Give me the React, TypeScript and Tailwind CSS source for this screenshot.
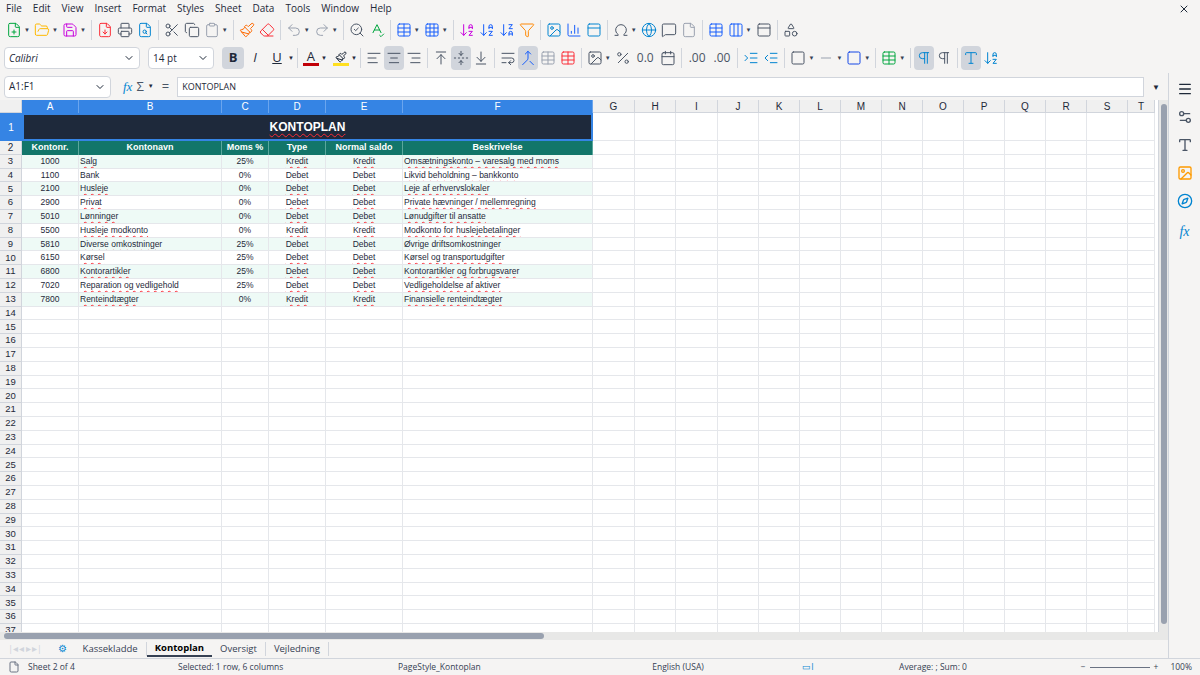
import React from "react";
import {
  FilePlus, FolderOpen, Save, FileDown, Printer, FileSearch, Scissors, Copy, Clipboard, Paintbrush, Eraser,
  Undo2, Redo2, SearchCheck, SpellCheck, Table, Grid3x3, ArrowDownAZ, ArrowDownZA, Filter, Image, BarChart3,
  Omega, Globe, MessageSquare, File, Columns3, PanelTop, Shapes, ChevronDown, AlignLeft, AlignCenter, AlignRight,
  ArrowUpToLine, FoldVertical, ArrowDownToLine, WrapText, Merge, Percent, Calendar, Indent, Outdent, Square,
  Minus, Pilcrow, Menu, Settings2, Type, ImageIcon, Compass, X,
} from "lucide-react";

const cols = [
  ["A", 57], ["B", 143], ["C", 47], ["D", 57], ["E", 77], ["F", 190], ["G", 42], ["H", 41], ["I", 42], ["J", 41],
  ["K", 41], ["L", 41], ["M", 41], ["N", 41], ["O", 41], ["P", 41], ["Q", 41], ["R", 41], ["S", 41], ["T", 27],
] as const;

const rows = [
  ["1000", "Salg", "25%", "Kredit", "Kredit", "Omsætningskonto – varesalg med moms"],
  ["1100", "Bank", "0%", "Debet", "Debet", "Likvid beholdning – bankkonto"],
  ["2100", "Husleje", "0%", "Debet", "Debet", "Leje af erhvervslokaler"],
  ["2900", "Privat", "0%", "Debet", "Debet", "Private hævninger / mellemregning"],
  ["5010", "Lønninger", "0%", "Debet", "Debet", "Lønudgifter til ansatte"],
  ["5500", "Husleje modkonto", "0%", "Kredit", "Kredit", "Modkonto for huslejebetalinger"],
  ["5810", "Diverse omkostninger", "25%", "Debet", "Debet", "Øvrige driftsomkostninger"],
  ["6150", "Kørsel", "25%", "Debet", "Debet", "Kørsel og transportudgifter"],
  ["6800", "Kontorartikler", "25%", "Debet", "Debet", "Kontorartikler og forbrugsvarer"],
  ["7020", "Reparation og vedligehold", "25%", "Debet", "Debet", "Vedligeholdelse af aktiver"],
  ["7800", "Renteindtægter", "0%", "Kredit", "Kredit", "Finansielle renteindtægter"],
];

const heads = ["Kontonr.", "Kontonavn", "Moms %", "Type", "Normal saldo", "Beskrivelse"];
const wavy = "underline decoration-wavy decoration-red-500 decoration-[1px] underline-offset-2";

function Ic({ I, c = "text-gray-600", dd = false }: { I: any; c?: string; dd?: boolean }) {
  return (
    <div className="flex items-center h-6 px-[2px]">
      <I className={`w-4 h-4 ${c}`} strokeWidth={1.5} />
      {dd && <span className="text-[6px] text-gray-700 ml-[2px]">▼</span>}
    </div>
  );
}
const Sep = () => <div className="w-px h-5 bg-gray-300 mx-[3px]" />;

export default function App() {
  return (
    <div className="w-[1200px] h-[675px] overflow-hidden bg-[#f5f4f3] text-[11px] text-gray-800 flex flex-col" style={{ fontFamily: "'Open Sans', 'Noto Sans', sans-serif" }}>
      <div className="h-[17px] flex items-center px-[6px] gap-[11px] text-[10px]">
        {["File", "Edit", "View", "Insert", "Format", "Styles", "Sheet", "Data", "Tools", "Window", "Help"].map((m) => <span key={m}>{m}</span>)}
        <X className="w-3 h-3 ml-auto mr-1" />
      </div>
      <div className="h-[26px] flex items-center px-1">
        <Ic I={FilePlus} c="text-green-600" dd /><Ic I={FolderOpen} c="text-amber-400" dd /><Ic I={Save} c="text-fuchsia-600" dd /><Sep />
        <Ic I={FileDown} c="text-red-500" /><Ic I={Printer} /><Ic I={FileSearch} c="text-sky-600" /><Sep />
        <Ic I={Scissors} /><Ic I={Copy} /><Ic I={Clipboard} c="text-gray-400" dd /><Sep />
        <Ic I={Paintbrush} c="text-orange-500" /><Ic I={Eraser} c="text-red-500" /><Sep />
        <Ic I={Undo2} c="text-gray-400" dd /><Ic I={Redo2} c="text-gray-400" dd /><Sep />
        <Ic I={SearchCheck} /><Ic I={SpellCheck} c="text-green-600" /><Sep />
        <Ic I={Table} c="text-blue-600" dd /><Ic I={Grid3x3} c="text-blue-600" dd /><Sep />
        <Ic I={ArrowDownAZ} c="text-fuchsia-600" /><Ic I={ArrowDownAZ} c="text-blue-600" /><Ic I={ArrowDownZA} c="text-blue-600" /><Ic I={Filter} c="text-orange-400" /><Sep />
        <Ic I={Image} c="text-sky-600" /><Ic I={BarChart3} c="text-blue-600" /><Ic I={PanelTop} c="text-sky-600" /><Sep />
        <Ic I={Omega} dd /><Ic I={Globe} c="text-sky-600" /><Ic I={MessageSquare} /><Ic I={File} c="text-gray-400" /><Sep />
        <Ic I={Table} c="text-blue-600" /><Ic I={Columns3} c="text-blue-600" dd /><Ic I={PanelTop} /><Sep /><Ic I={Shapes} />
      </div>
      <div className="h-[30px] flex items-center px-1">
        <div className="w-[136px] h-[22px] bg-white border border-gray-300 rounded-sm flex items-center pl-1 italic text-[10px]">Calibri<ChevronDown className="w-3 h-3 ml-auto mr-1" /></div>
        <div className="w-[66px] h-[22px] bg-white border border-gray-300 rounded-sm flex items-center pl-1 ml-2 text-[10px]">14 pt<ChevronDown className="w-3 h-3 ml-auto mr-1" /></div>
        <div className="ml-2 w-[22px] h-[22px] bg-gray-300 rounded-sm flex items-center justify-center font-bold text-[13px]">B</div>
        <div className="w-[22px] flex justify-center italic text-[13px]">I</div>
        <div className="w-[22px] flex justify-center underline text-[13px]">U</div><span className="text-[6px]">▼</span><Sep />
        <div className="flex flex-col items-center w-5"><span className="text-[13px] leading-none">A</span><div className="w-4 h-[3px] bg-red-700" /></div><span className="text-[6px]">▼</span>
        <div className="flex flex-col items-center w-5 ml-1"><Paintbrush className="w-3 h-3" /><div className="w-4 h-[3px] bg-yellow-300" /></div><span className="text-[6px]">▼</span><Sep />
        <Ic I={AlignLeft} /><div className="bg-gray-300 rounded-sm"><Ic I={AlignCenter} /></div><Ic I={AlignRight} /><Sep />
        <Ic I={ArrowUpToLine} /><div className="bg-gray-300 rounded-sm"><Ic I={FoldVertical} /></div><Ic I={ArrowDownToLine} /><Sep />
        <Ic I={WrapText} /><div className="bg-gray-300 rounded-sm"><Ic I={Merge} c="text-blue-600" /></div><Ic I={Table} c="text-gray-400" /><Ic I={Table} c="text-red-500" /><Sep />
        <Ic I={ImageIcon} dd /><Ic I={Percent} /><span className="px-1 text-[12px] text-gray-600">0.0</span><Ic I={Calendar} /><Sep />
        <span className="px-1 text-[12px] text-gray-600">.00</span><span className="px-1 text-[12px] text-gray-600">.00</span><Sep />
        <Ic I={Indent} c="text-sky-600" /><Ic I={Outdent} c="text-sky-600" /><Sep />
        <Ic I={Square} dd /><Ic I={Minus} c="text-gray-400" dd /><Ic I={Square} c="text-blue-700" dd /><Sep />
        <Ic I={Table} c="text-green-600" dd /><Sep />
        <div className="bg-gray-300 rounded-sm"><Ic I={Pilcrow} c="text-sky-600" /></div><Ic I={Pilcrow} /><Sep />
        <div className="bg-gray-300 rounded-sm"><Ic I={Type} c="text-sky-600" /></div><Ic I={ArrowDownAZ} c="text-sky-600" />
      </div>
      <div className="flex flex-1 min-h-0">
        <div className="flex-1 flex flex-col min-w-0">
          <div className="h-[27px] flex items-center px-1 gap-1">
            <div className="w-[107px] h-[22px] bg-white border border-gray-300 rounded-sm flex items-center pl-1 text-[10px]">A1:F1<ChevronDown className="w-3 h-3 ml-auto mr-1" /></div>
            <span className="italic text-sky-600 text-[13px] ml-2" style={{ fontFamily: "'Liberation Serif', serif" }}>fx</span>
            <span className="text-[13px] text-gray-600">Σ</span><span className="text-[6px]">▼</span><span className="text-[13px] text-gray-600 mx-1">=</span>
            <div className="flex-1 h-[20px] bg-white border border-gray-300 flex items-center pl-1 text-[9px]">KONTOPLAN</div>
            <span className="text-[8px] mx-1">▼</span>
          </div>
          <div className="flex flex-1 min-h-0">
            <div className="flex-1 min-w-0 bg-white overflow-hidden flex flex-col" style={{ fontFamily: "'Liberation Sans', 'Open Sans', sans-serif" }}>
              <div className="flex h-[13px] text-[10px] shrink-0">
                <div className="w-[22px] bg-[#f0f0f0] border-r border-b border-gray-300" />
                {cols.map(([c, w], i) => (
                  <div key={c} style={{ width: w }} className={`shrink-0 flex items-center justify-center border-r ${i < 6 ? "bg-[#3584e4] text-white border-[#6aa5ee]" : "bg-[#f0f0f0] border-gray-300 border-b"}`}>{c}</div>
                ))}
              </div>
              <div className="flex h-[28px] shrink-0">
                <div className="w-[22px] bg-[#3584e4] text-white flex items-center justify-center text-[10px]">1</div>
                <div className="w-[571px] bg-[#1e293b] border-2 border-[#3584e4] text-white font-bold text-[12px] flex items-center justify-center"><span className={wavy}>KONTOPLAN</span></div>
                {cols.slice(6).map(([c, w]) => <div key={c} style={{ width: w }} className="shrink-0 border-r border-b border-gray-200" />)}
              </div>
              <div className="flex h-[13.8px] shrink-0">
                <div className="w-[22px] bg-[#f0f0f0] border-r border-b border-gray-300 flex items-center justify-center text-[10px]">2</div>
                {heads.map((h, i) => (
                  <div key={h} style={{ width: cols[i][1] }} className="shrink-0 bg-[#12766a] text-white font-bold text-[9px] flex items-center justify-center border-r border-[#5aa79c]">{h}</div>
                ))}
                {cols.slice(6).map(([c, w]) => <div key={c} style={{ width: w }} className="shrink-0 border-r border-b border-gray-200" />)}
              </div>
              {Array.from({ length: 35 }, (_, k) => {
                const d = rows[k];
                const bg = d ? (k % 2 === 0 ? "bg-[#eefaf6]" : "bg-white") : "";
                return (
                  <div key={k} className="flex h-[13.8px] shrink-0 text-[8.5px]">
                    <div className="w-[22px] shrink-0 bg-[#f0f0f0] border-r border-b border-gray-300 flex items-center justify-center text-[9.5px]">{k + 3}</div>
                    {cols.map(([c, w], i) => {
                      const v = d && i < 6 ? d[i] : "";
                      const al = i === 0 || i === 2 || i === 3 || i === 4 ? "justify-center" : "pl-[1px]";
                      const ul = v && i !== 0 && i !== 2 && v !== "Bank" ? wavy : "";
                      return (
                        <div key={c} style={{ width: w }} className={`shrink-0 flex items-center whitespace-nowrap overflow-hidden border-r border-b border-gray-200 ${i < 6 ? bg : ""} ${al}`}>
                          <span className={ul}>{v}</span>
                        </div>
                      );
                    })}
                  </div>
                );
              })}
            </div>
            <div className="w-[10px] bg-[#e8e8e7] border-l border-gray-300 flex justify-center pt-1">
              <div className="w-[6px] h-[520px] bg-gray-400 rounded" />
            </div>
          </div>
          <div className="h-[8px] bg-[#e8e8e7] flex items-center"><div className="w-[540px] h-[6px] bg-gray-400 rounded ml-1" /></div>
          <div className="h-[18px] flex items-center text-[9.5px] gap-0 text-gray-700">
            <span className="text-gray-300 px-2 tracking-tighter">|◂ ◂ ▸ ▸|</span>
            <span className="text-sky-600 px-2">⚙</span>
            <span className="px-2 border-r border-gray-300">Kassekladde</span>
            <span className="px-2 font-bold border-b-2 border-gray-700 text-black">Kontoplan</span>
            <span className="px-2 border-r border-gray-300">Oversigt</span>
            <span className="px-2 border-r border-gray-300">Vejledning</span>
          </div>
        </div>
        <div className="w-[32px] border-l border-gray-300 flex flex-col items-center gap-3 pt-2">
          <Menu className="w-4 h-4" /><Settings2 className="w-4 h-4 text-gray-600" /><Type className="w-4 h-4 text-gray-600" />
          <ImageIcon className="w-4 h-4 text-amber-500" /><Compass className="w-4 h-4 text-sky-600" />
          <span className="italic text-sky-600 text-[14px]" style={{ fontFamily: "'Liberation Serif', serif" }}>fx</span>
        </div>
      </div>
      <div className="h-[17px] border-t border-gray-300 flex items-center text-[8.5px] text-gray-700 px-2">
        <File className="w-3 h-3 text-gray-500" />
        <span className="ml-2 w-[150px]">Sheet 2 of 4</span>
        <span className="w-[220px]">Selected: 1 row, 6 columns</span>
        <span className="w-[200px]">PageStyle_Kontoplan</span>
        <span className="w-[160px] text-center">English (USA)</span>
        <span className="w-[100px] text-center text-sky-600">▭I</span>
        <span className="w-[150px] text-center">Average: ; Sum: 0</span>
        <span className="ml-auto flex items-center gap-1">− <span className="w-[60px] h-px bg-gray-500 inline-block" /> + <span className="ml-2">100%</span></span>
      </div>
    </div>
  );
}
